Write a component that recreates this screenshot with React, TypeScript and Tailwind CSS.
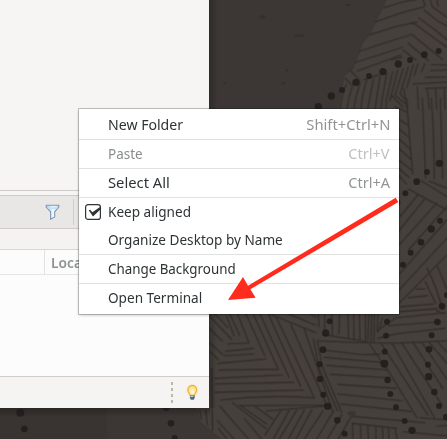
import React from "react";

type Item = {
  label: string;
  width: number;
  shortcut?: string;
  shortcutWidth?: number;
  disabled?: boolean;
  checked?: boolean;
  separated?: boolean;
};

const items: Item[] = [
  { label: "New Folder", width: 75.2, shortcut: "Shift+Ctrl+N", shortcutWidth: 83.7, separated: true },
  { label: "Paste", width: 35, shortcut: "Ctrl+V", shortcutWidth: 41.7, disabled: true, separated: true },
  { label: "Select All", width: 62, shortcut: "Ctrl+A", shortcutWidth: 41.7, separated: true },
  { label: "Keep aligned", width: 83.3, checked: true },
  { label: "Organize Desktop by Name", width: 174.8, separated: true },
  { label: "Change Background", width: 127.3, separated: true },
  { label: "Open Terminal", width: 94.2 },
];

/* Text condensed or expanded to the advance width of the desktop font. */
function Fitted({ text, width, right = false }: { text: string; width: number; right?: boolean }) {
  const ref = React.useRef<HTMLSpanElement>(null);
  const [scale, setScale] = React.useState(1);
  React.useLayoutEffect(() => {
    if (ref.current) setScale(width / ref.current.offsetWidth);
  }, [width, text]);
  return (
    <span
      ref={ref}
      className={`inline-block whitespace-nowrap ${right ? "origin-right" : "origin-left"}`}
      style={{ transform: `scaleX(${scale})` }}
    >
      {text}
    </span>
  );
}

const upperStrokes =
  "M535 23 L600 4 L632 0 M512 65 L590 38 L655 21 L660 16 L655 0 M495 104 L570 80 L636 66 M463 154 L540 128 L620 103 L712 178 M452 187 L530 162 L592 142 M457 213 L520 190 L588 165 M624 68 L660 94 L726 142 M642 54 L680 82 L726 119 M658 31 L700 64 L726 78 M676 0 L682 20 L726 52 M696 0 L699 18 M610 130 L670 182 M594 150 L633 180 M437 212 L463 240 M421 235 L439 254 M477 239 L523 224 M560 180 L590 171 M424 253 Q410 285 405 327 M444 252 Q430 290 426 327 M466 248 Q451 290 447 327 M485 241 Q470 290 468 327 M505 237 L488 327 M525 230 L510 327 M545 220 L531 300 L528 327 M563 215 L544 300 L543 327 M578 210 L555 301 M594 207 L570 286 M610 201 L586 279 M625 194 L605 264 M639 190 L628 226 M659 190 L650 215 M559 286 L595 321 M571 286 L602 312 M585 280 L603 302 M596 267 L607 327 M726 195 L680 194 M726 209 L677 212 M726 231 L661 232 M726 246 L624 252 M637 260 L640 327 M662 265 L726 263 M667 268 L673 327 M692 268 L695 327 M718 268 L720 327";

const rightStrokes =
  "M35 -5 Q42 100 53 222 M82 -5 L92 235 M109 -5 Q118 110 117 235 M136 -5 L143 235 M0 20 L36 36 M0 50 L38 75 M5 80 L42 112 M0 105 L44 147 M0 135 L48 178 M5 175 L49 210 M12 205 L42 232 M10 225 L34 252 M40 267 L156 330 M78 242 L156 290 M103 243 L156 265 M15 350 L69 284 M12 392 L88 298 M12 435 L125 309 M40 450 L156 319 M15 520 L156 359 M12 570 L156 414 M12 610 L156 465 M96 505 Q125 560 143 630 M127 499 L156 568 M91 545 L122 610 M62 567 L90 567 M40 593 L97 587 M18 620 L115 612 M12 635 L125 626";

const lowerStrokes =
  "M13 55 L52 93 M15 20 L80 88 M30 12 L69 53 M65 20 L87 77 M75 12 L104 77 M98 12 L132 99 L68 102 M123 12 L179 136 M62 124 L145 115 M145 12 L220 178 L40 180 M165 12 L252 201 M30 205 L232 195 M190 12 L287 229 M31 222 L266 217 M214 22 L328 264 M30 247 L296 240 M257 42 L365 285 L102 287 M297 55 L382 302 M196 13 L333 68 M250 12 L331 45 M318 12 L333 22 M13 98 L53 134 M16 125 L40 149 M57 137 L145 132 M40 160 L183 147 M48 270 Q190 253 328 264 M184 303 L374 287 M82 278 L183 356 M104 285 L185 342 M150 289 L204 328 M45 289 L130 387 M37 332 L87 387 M40 355 L66 387 M119 326 L169 387 M227 303 L180 374 M252 302 L205 387 M275 300 L223 387 M298 300 L250 387 M320 300 L273 387 M354 302 L298 387 M386 302 L335 387 M410 315 L367 387 M438 320 L400 387 M337 90 L350 165 L410 308 M325 86 L342 175 L397 302 M342 93 L475 98 L591 99 L726 92 M353 73 L485 95 M340 12 L342 50 M359 12 L359 58 M381 12 L382 79 M403 12 L402 71 M429 12 L430 86 M446 12 L447 89 M463 12 L465 91 M481 12 L481 96 M491 12 L488 92 M500 12 L497 98 M508 12 L507 96 M519 12 L516 64 M532 26 L519 65 M518 61 L571 24 L720 8 M550 47 L706 35 M519 85 L575 71 L720 55 M347 119 L475 134 L525 133 M358 142 L540 158 M366 166 L548 180 M377 193 L551 203 M399 223 L573 235 M399 252 L591 272 M407 282 L617 304 M442 319 L660 338 M442 340 L574 355 M442 340 L444 387 M466 347 L468 387 M488 348 L490 387 M512 349 L513 387 M532 349 L534 387 M550 351 L552 387 M570 353 L576 387 M490 97 L559 197 L635 322 M527 98 L668 314 M560 98 L688 322 M590 98 L712 287 M623 96 L714 236 M651 97 L726 208 M671 96 L726 160 M695 93 L726 126 M20 180 L22 360 M645 323 L726 330 M695 348 L726 347 M693 0 L715 12 M596 365 L726 378";

const dots: number[][] = [
  [955, 320, 11], [994, 288, 11], [1026, 270, 9], [1068, 247, 11], [1107, 228, 9], [1149, 215, 11], [1195, 192, 11], [1230, 180, 9], [1273, 164, 10], [1316, 153, 9],
  [1318, 490, 11], [1281, 516, 9], [1250, 545, 10], [1216, 580, 9], [1190, 608, 11],
  [1320, 662, 9], [1294, 687, 11], [1263, 727, 10], [1232, 758, 9], [1209, 794, 9],
  [1326, 919, 10], [1341, 885, 9], [1312, 966, 10], [1295, 1006, 9], [1287, 1048, 10], [1284, 1094, 9], [1286, 1130, 11], [1303, 1176, 10], [1317, 1218, 9], [1339, 1251, 10],
  [989, 964, 9], [977, 999, 11], [969, 1049, 10], [959, 1093, 9], [960, 1137, 10], [970, 1184, 9], [983, 1219, 11], [1012, 1261, 10], [1034, 1301, 9],
  [1161, 965, 9], [1158, 1007, 9], [1154, 1055, 9], [1153, 1091, 12], [1163, 1140, 10], [1171, 1182, 9], [1188, 1222, 9], [1214, 1263, 9], [1236, 1291, 11],
  [61, 1238, 12], [73, 1287, 10], [498, 1222, 11], [513, 1270, 10], [524, 1314, 9],
];

function Wallpaper() {
  return (
    <svg className="absolute inset-0 h-full w-full" viewBox="0 0 1341 1317" preserveAspectRatio="none">
      <defs>
        <linearGradient id="windowShade" x1="0" x2="1">
          <stop offset="0" stopColor="#1e1a18" stopOpacity=".4" />
          <stop offset="1" stopColor="#1e1a18" stopOpacity="0" />
        </linearGradient>
        <linearGradient id="lowerShade" x1="0" x2="0" y1="0" y2="1">
          <stop offset="0" stopColor="#1e1a18" stopOpacity=".5" />
          <stop offset="1" stopColor="#1e1a18" stopOpacity="0" />
        </linearGradient>
        <filter id="soft" x="-10%" y="-10%" width="120%" height="120%">
          <feGaussianBlur stdDeviation="1.1" />
        </filter>
        <radialGradient id="warm">
          <stop offset="0" stopColor="#4c3e39" stopOpacity=".3" />
          <stop offset="1" stopColor="#4c3e39" stopOpacity="0" />
        </radialGradient>
      </defs>
      <rect width="1341" height="1317" fill="#3c3734" />
      <path d="M0 1224 H318 L323 1317 H0Z" fill="#393431" />
      <path d="M1160 0 L1110 105 1090 128 1060 208 1035 226 1015 327 1000 930 600 930 590 1224 602 1265 665 1317 H1341 V0Z" fill="#46403c" />
      <ellipse cx="1310" cy="80" rx="90" ry="80" fill="url(#warm)" />
      <ellipse cx="850" cy="1120" rx="110" ry="80" fill="url(#warm)" />
      <ellipse cx="1290" cy="900" rx="90" ry="80" fill="url(#warm)" />
      <g fill="none" stroke="#2b2623" strokeWidth="3.9" strokeLinecap="round" strokeLinejoin="round" opacity=".7" filter="url(#soft)">
        <path transform="translate(615 0)" d={upperStrokes} />
        <path transform="translate(1185 300)" d={rightStrokes} />
        <path transform="translate(615 930)" d={lowerStrokes} />
        <path d="M598 1230 L605 1258 M617 1230 L622 1275 M636 1105 L637 1290" />
      </g>
      <g fill="#2d2826" opacity=".45" filter="url(#soft)">
        <ellipse cx="787" cy="51" rx="9" ry="5" />
        <ellipse cx="897" cy="107" rx="19" ry="4" />
        <ellipse cx="1043" cy="15" rx="8" ry="4" />
        <ellipse cx="860" cy="211" rx="4" ry="4" />
        <ellipse cx="850" cy="250" rx="6" ry="4" />
        <ellipse cx="674" cy="249" rx="4" ry="4" />
        <ellipse cx="1055" cy="1240" rx="13" ry="7" />
      </g>
      <g fill="#211d1b" opacity=".85" filter="url(#soft)">
        {dots.map(([x, y, r]) => (
          <circle key={`${x}-${y}`} cx={x} cy={y} r={r} />
        ))}
      </g>
      <rect x="627" width="24" height="1224" fill="url(#windowShade)" />
      <rect y="1224" width="630" height="26" fill="url(#lowerShade)" />
    </svg>
  );
}

function FilterIcon() {
  return (
    <svg className="h-4 w-[15px]" viewBox="0 0 15 16">
      <defs>
        <linearGradient id="funnel" x1="0" y1="0" x2="1" y2="0">
          <stop offset="0" stopColor="#a9cbe7" />
          <stop offset=".55" stopColor="#f2fbff" />
          <stop offset="1" stopColor="#b7dcf5" />
        </linearGradient>
      </defs>
      <path d="M1.2 1.2H13.8V3L9.7 7.8V13L5.6 15.2V7.8L1.2 3Z" fill="url(#funnel)" stroke="#8396b8" strokeWidth="1.1" />
      <path d="M2 3.3H13L11.5 5H3.5Z" fill="#c4e3f6" />
    </svg>
  );
}

function BulbIcon() {
  return (
    <svg className="h-[18px] w-4" viewBox="0 0 16 18">
      <defs>
        <radialGradient id="bulb" cx=".5" cy=".65">
          <stop offset="0" stopColor="#fffef0" />
          <stop offset="1" stopColor="#ffdc72" />
        </radialGradient>
      </defs>
      <ellipse cx="8.3" cy="6.7" rx="6" ry="6.2" fill="#ffd98a" opacity=".4" />
      <path d="M6 11.2C6 9.2 3.9 8.5 3.9 5.8A4.4 4.4 0 0 1 12.7 5.8C12.7 8.5 10.6 9.2 10.6 11.2Z" fill="url(#bulb)" stroke="#eeb03c" strokeWidth="1.1" />
      <path d="M5.9 11.5H10.7V14L9.7 15.7H6.9L5.9 14Z" fill="#536a7d" />
      <path d="M6.3 12.5H9.3" stroke="#c4d0d7" />
    </svg>
  );
}

function AppWindow() {
  return (
    <div className="relative flex h-[408px] w-[209px] flex-col overflow-hidden bg-[#f6f5f4]">
      <div className="h-[190px] shrink-0" />
      <div className="h-[6px] shrink-0 border-y border-[#cfcbc7] bg-[#f6f5f4]" />
      <div className="flex h-[33px] shrink-0 items-center border-b border-[#d0cbc6] bg-[#e9e7e6] pl-[45px]">
        <FilterIcon />
        <div className="ml-[13px] h-[26px] w-px bg-[#cfccca]" />
      </div>
      <div className="h-[21px] shrink-0 border-b border-[#d8d5d2] bg-[#f5f3f2]" />
      <div className="flex h-[25px] shrink-0 border-b border-[#e5e5e5] bg-[#fcfcfc]">
        <div className="w-[45px] border-r border-[#e2e2e2]" />
        <div className="pl-[6px] text-[14.7px] leading-[24px] font-semibold text-[#8f9293]">
          <Fitted text="Location" width={58} />
        </div>
      </div>
      <div className="grow bg-[#fcfcfc]" />
      <div className="flex h-8 shrink-0 items-center justify-end border-t border-[#d2ccc7] bg-[#f5f4f2] pr-[9px]">
        <div className="mr-[11px] flex flex-col gap-[3px]">
          <i className="h-[3px] w-[2px] bg-[#b9b8ac]" />
          <i className="h-[3px] w-[2px] bg-[#b9b8ac]" />
          <i className="h-[3px] w-[2px] bg-[#b9b8ac]" />
          <i className="h-[3px] w-[2px] bg-[#b9b8ac]" />
        </div>
        <BulbIcon />
      </div>
    </div>
  );
}

function ContextMenu() {
  return (
    <div className="absolute top-[109px] left-[79px] flex h-[205px] w-[320px] flex-col bg-white pt-[2px] text-[15px] leading-5 text-[#2e3436] shadow-[0_0_0_1px_rgba(0,0,0,0.2),0_1px_3px_rgba(0,0,0,0.25)]">
      {items.map((item) => (
        <div
          key={item.label}
          className={`flex shrink-0 items-center justify-between pr-[9px] pl-[29px] ${
            item.separated ? "h-[29px] border-b border-[#e1e1e1]" : "h-[28px]"
          } ${item.disabled ? "text-[#8b8e8f]" : ""}`}
        >
          <div className="flex items-center">
            {item.checked && (
              <svg className="mr-[7px] -ml-[23px] h-4 w-4" viewBox="0 0 16 16">
                <rect x=".6" y=".6" width="14.8" height="14.8" rx="2.5" fill="#fff" stroke="#2e3436" strokeWidth="1.2" />
                <path d="M3.7 6.3L5.2 5.8 7.4 8.2 15.4 2.8V5.5L8 12.6Z" fill="#2e3436" />
              </svg>
            )}
            <div className="pb-[2px]">
              <Fitted text={item.label} width={item.width} />
            </div>
          </div>
          {item.shortcut && (
            <div className={`pb-[2px] ${item.disabled ? "text-[#bfc0c1]" : "text-[#919494]"}`}>
              <Fitted text={item.shortcut} width={item.shortcutWidth ?? 42} right />
            </div>
          )}
        </div>
      ))}
    </div>
  );
}

export default function App() {
  return (
    <main className="relative h-[439px] w-[447px] overflow-hidden font-['Noto_Sans',sans-serif]">
      <Wallpaper />
      <AppWindow />
      <ContextMenu />
      <svg className="absolute inset-0 h-full w-full" viewBox="0 0 1341 1317">
        <path d="M1187 593L1195 606 751 868 767 893 684 900 729 831 744 857Z" fill="#ff2b1c" />
      </svg>
    </main>
  );
}
